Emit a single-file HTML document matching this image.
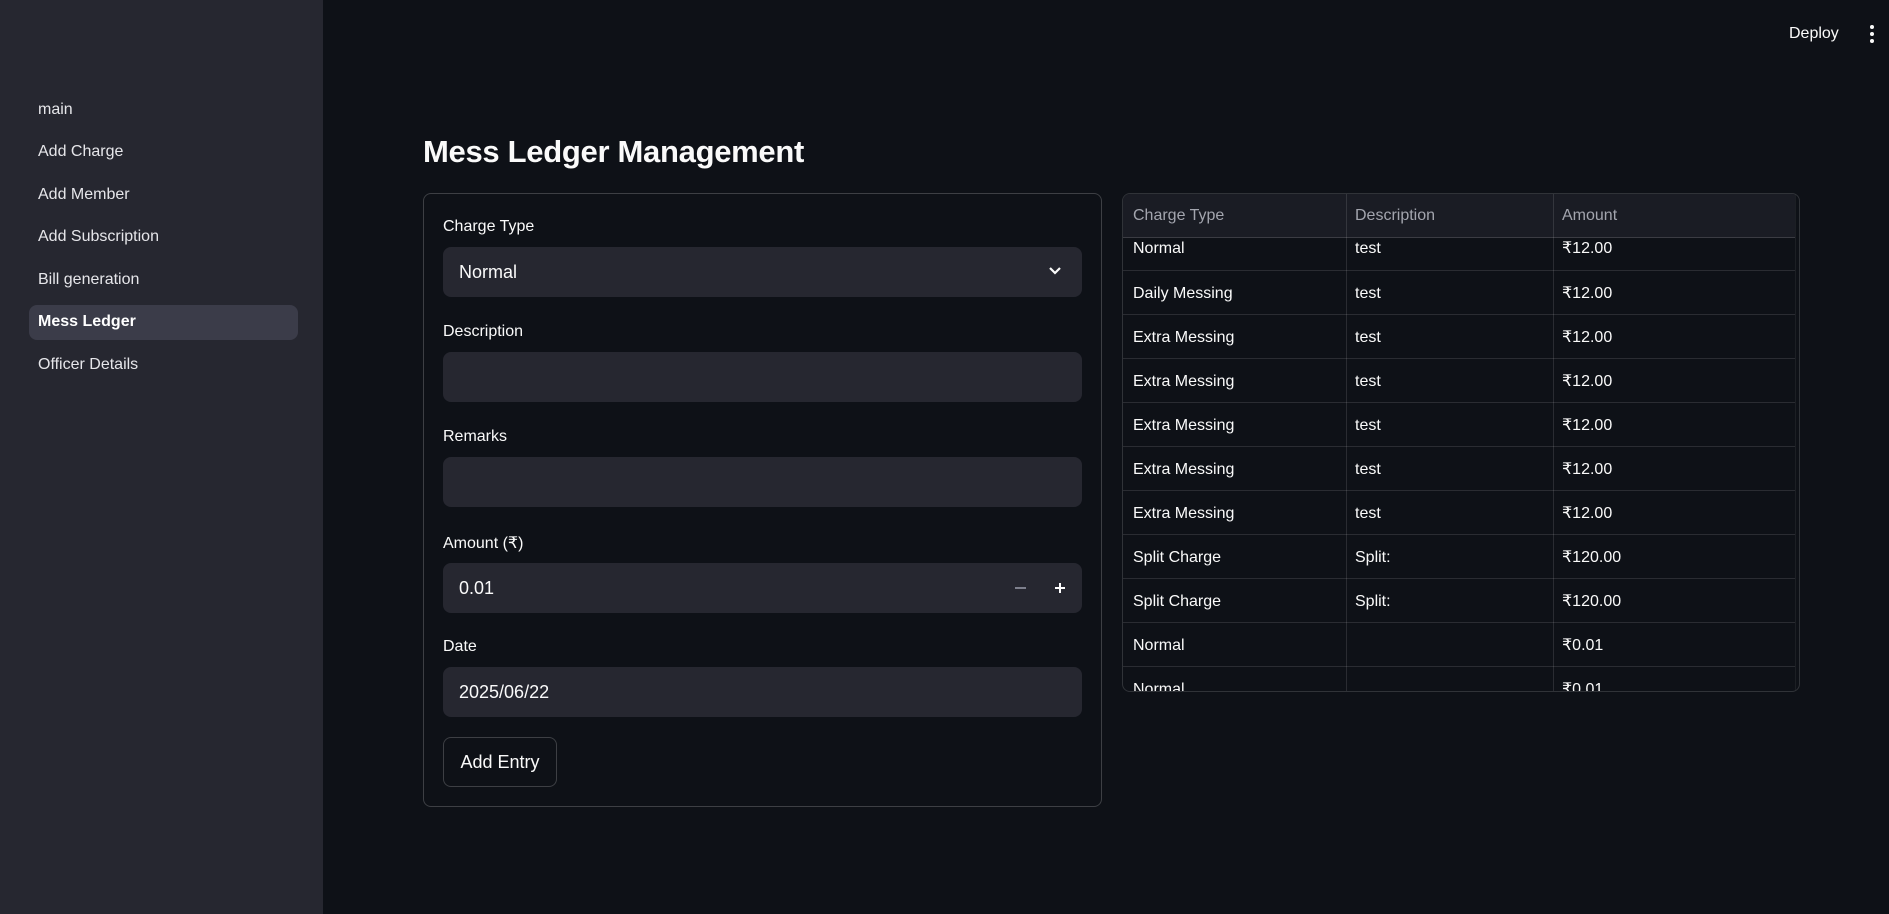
<!DOCTYPE html>
<html><head><meta charset="utf-8">
<style>
*{box-sizing:border-box;margin:0;padding:0}
body{width:1889px;height:914px;background:#0e1117;font-family:"Liberation Sans",sans-serif;color:#fafafa;position:relative;overflow:hidden}
.side{position:absolute;left:0;top:0;width:323px;height:914px;background:#262730}
.nav{position:absolute;left:38px;font-size:16px;color:#e6e6ea}
.active{position:absolute;left:29px;top:305px;width:269px;height:35px;background:#3b3c49;border-radius:8px}
.h1{position:absolute;left:423px;top:134px;font-size:31px;font-weight:bold;letter-spacing:-0.3px}
.form{position:absolute;left:423px;top:193px;width:679px;height:614px;border:1px solid rgba(250,250,250,0.2);border-radius:8px}
.lbl{position:absolute;left:443px;font-size:16px;color:#fafafa}
.inp{position:absolute;left:443px;width:639px;height:50px;background:#262730;border-radius:8px;font-size:18px;padding:0 16px;line-height:50px}
.btn{position:absolute;left:443px;top:737px;width:114px;height:50px;border:1px solid rgba(250,250,250,0.2);border-radius:8px;font-size:18px;line-height:48px;text-align:center;background:#0e1117}
.tbl{position:absolute;left:1122px;top:193px;width:678px;height:499px;border:1px solid rgba(250,250,250,0.15);border-radius:8px;overflow:hidden}
.hd{position:absolute;left:0;top:0;width:672px;height:44px;background:#1a1c24;border-bottom:1px solid rgba(250,250,250,0.15);z-index:2}
.cell{position:absolute;font-size:16px;white-space:nowrap;line-height:18px}
.vl{position:absolute;top:0;width:1px;height:499px;background:rgba(250,250,250,0.12);z-index:3}
.r{position:absolute;left:0;width:672px;height:44px;border-bottom:1px solid rgba(250,250,250,0.12)}
.r span{position:absolute;top:14px;font-size:16px;white-space:nowrap;line-height:18px;height:18px;overflow:visible}
.a{left:10px}.b{left:232px}.c{left:439px}
</style></head><body>
<div class="side">
<div class="active"></div>
<div class="nav" style="top:101px">main</div>
<div class="nav" style="top:143px">Add Charge</div>
<div class="nav" style="top:186px">Add Member</div>
<div class="nav" style="top:228px">Add Subscription</div>
<div class="nav" style="top:271px">Bill generation</div>
<div class="nav" style="top:313px;font-weight:bold;color:#fff">Mess Ledger</div>
<div class="nav" style="top:356px">Officer Details</div>
</div>
<div style="position:absolute;left:1789px;top:25px;font-size:16px">Deploy</div>
<div style="position:absolute;left:1870px;top:25px;width:4px">
<div style="width:4px;height:4px;border-radius:2px;background:#fafafa;margin-bottom:3px"></div>
<div style="width:4px;height:4px;border-radius:2px;background:#fafafa;margin-bottom:3px"></div>
<div style="width:4px;height:4px;border-radius:2px;background:#fafafa"></div></div>

<div class="h1">Mess Ledger Management</div>
<div class="form"></div>
<div class="lbl" style="top:218px">Charge Type</div>
<div class="inp" style="top:247px">Normal
<svg style="position:absolute;right:20px;top:19px" width="14" height="10" viewBox="0 0 14 10"><path d="M2 2l5 5 5-5" stroke="#fafafa" stroke-width="2.2" fill="none"/></svg></div>
<div class="lbl" style="top:323px">Description</div>
<div class="inp" style="top:352px"></div>
<div class="lbl" style="top:428px">Remarks</div>
<div class="inp" style="top:457px"></div>
<div class="lbl" style="top:533px">Amount (₹)</div>
<div class="inp" style="top:563px">0.01
<div style="position:absolute;left:572px;top:24px;width:11px;height:2px;background:#7d7f8c"></div>
<div style="position:absolute;left:612px;top:24px;width:10px;height:2px;background:#fff"></div>
<div style="position:absolute;left:616px;top:20px;width:2px;height:10px;background:#fff"></div>
</div>
<div class="lbl" style="top:638px">Date</div>
<div class="inp" style="top:667px">2025/06/22</div>
<div class="btn">Add Entry</div>

<div class="tbl">
<div class="r" style="top:33px"><span class="a" style="top:13px">Normal</span><span class="b" style="top:13px">test</span><span class="c" style="top:13px">₹12.00</span></div>
<div class="r" style="top:77px"><span class="a">Daily Messing</span><span class="b">test</span><span class="c">₹12.00</span></div>
<div class="r" style="top:121px"><span class="a">Extra Messing</span><span class="b">test</span><span class="c">₹12.00</span></div>
<div class="r" style="top:165px"><span class="a">Extra Messing</span><span class="b">test</span><span class="c">₹12.00</span></div>
<div class="r" style="top:209px"><span class="a">Extra Messing</span><span class="b">test</span><span class="c">₹12.00</span></div>
<div class="r" style="top:253px"><span class="a">Extra Messing</span><span class="b">test</span><span class="c">₹12.00</span></div>
<div class="r" style="top:297px"><span class="a">Extra Messing</span><span class="b">test</span><span class="c">₹12.00</span></div>
<div class="r" style="top:341px"><span class="a">Split Charge</span><span class="b">Split:</span><span class="c">₹120.00</span></div>
<div class="r" style="top:385px"><span class="a">Split Charge</span><span class="b">Split:</span><span class="c">₹120.00</span></div>
<div class="r" style="top:429px"><span class="a">Normal</span><span class="b"></span><span class="c">₹0.01</span></div>
<div class="r" style="top:473px"><span class="a">Normal</span><span class="b"></span><span class="c">₹0.01</span></div>
<div class="hd">
<div class="cell" style="left:10px;top:13px;color:#a3a5ae">Charge Type</div>
<div class="cell" style="left:232px;top:13px;color:#a3a5ae">Description</div>
<div class="cell" style="left:439px;top:13px;color:#a3a5ae">Amount</div>
</div>
<div class="vl" style="left:223px"></div>
<div class="vl" style="left:430px"></div>
<div class="vl" style="left:672px;background:rgba(250,250,250,0.06)"></div>
</div>
</body></html>
